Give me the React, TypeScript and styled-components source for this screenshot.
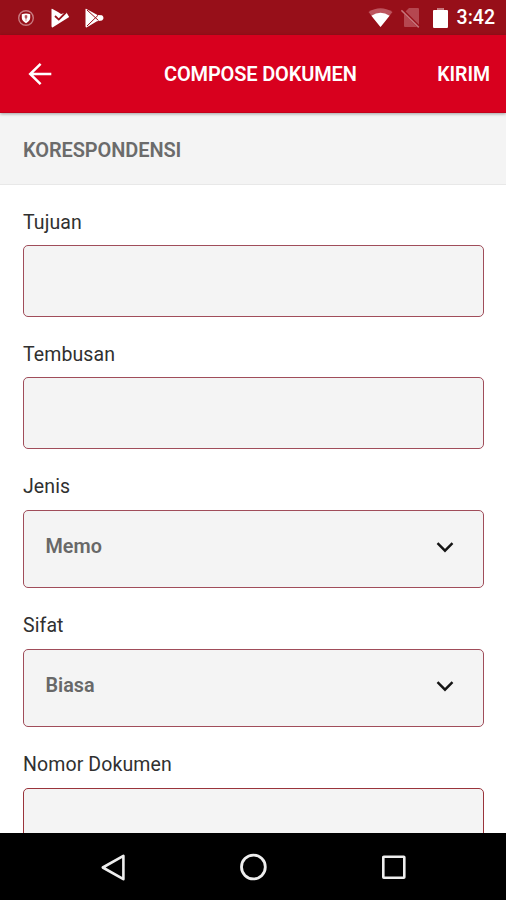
import React from 'react';
import styled, { createGlobalStyle } from 'styled-components';

const GlobalStyle = createGlobalStyle`
  * { box-sizing: border-box; }
  body { margin: 0; background: #fff; font-family: Roboto, "Liberation Sans", sans-serif; }
`;

const Screen = styled.div`
  width: 506px;
  height: 900px;
  display: flex;
  flex-direction: column;
  overflow: hidden;
  background: #fff;
`;

const StatusBar = styled.div`
  flex: none;
  height: 35px;
  display: flex;
  align-items: center;
  justify-content: space-between;
  padding: 0 11px 0 17px;
  background: #970f19;
  color: #fff;
`;

const Notifications = styled.div`
  display: flex;
  align-items: center;
`;

const StatusIcon = styled.svg<{ $gap?: number }>`
  display: block;
  flex: none;
  margin-right: ${(p) => p.$gap ?? 0}px;
`;

const Clock = styled.span`
  font-size: 19.5px;
  font-weight: 500;
  line-height: 36px;
  padding-top: 1px;
`;

const AppBar = styled.header`
  flex: none;
  position: relative;
  z-index: 1;
  height: 78px;
  display: grid;
  grid-template-columns: 120px 1fr 120px;
  align-items: center;
  padding: 0 16px 0 24px;
  background: #d8001e;
  color: #fff;
  border-bottom: 1px solid #c4001a;
  box-shadow: 0 1px 3px rgba(0, 0, 0, 0.35);
`;

const IconButton = styled.button`
  width: 32px;
  height: 32px;
  padding: 0;
  border: 0;
  background: none;
  color: inherit;
`;

const Title = styled.h1`
  margin: 0;
  font-size: 20px;
  font-weight: 600;
  line-height: 24px;
  letter-spacing: -0.15px;
  white-space: nowrap;
`;

const TitleSlot = styled.div`
  display: flex;
  padding: 1px 0 0 20px;
`;

const SendButton = styled.button`
  justify-self: end;
  padding: 2px 0 0;
  border: 0;
  background: none;
  color: inherit;
  font: 600 19.5px/24px Roboto, sans-serif;
  letter-spacing: -0.05px;
`;

const SectionHeader = styled.h2`
  flex: none;
  height: 72px;
  margin: 0;
  padding: 25px 23px 0;
  border-bottom: 1px solid #e8e8e8;
  background: #f4f4f4;
  color: #6b6b6b;
  font-size: 20px;
  font-weight: 600;
  line-height: 24px;
  letter-spacing: -0.1px;
`;

const Form = styled.main`
  flex: 1;
  min-height: 0;
  display: flex;
  flex-direction: column;
  gap: 26px;
  padding: 26px 22px 0 23px;
  overflow: hidden;
`;

const Field = styled.div`
  flex: none;
`;

const Label = styled.label<{ $gap: number }>`
  display: block;
  margin-bottom: ${(p) => p.$gap}px;
  color: #303030;
  font-size: 19.5px;
  font-weight: 400;
  line-height: 24px;
  letter-spacing: 0.1px;
`;

const Box = styled.div<{ $height: number; $strong?: boolean }>`
  height: ${(p) => p.$height}px;
  display: flex;
  align-items: center;
  justify-content: space-between;
  padding: 0 29px 4px 21.5px;
  border: 1px solid ${(p) => (p.$strong ? '#9a343b' : '#a04d5a')};
  border-radius: 5px;
  background: #f4f4f4;
`;

const Value = styled.span`
  color: #686868;
  font-size: 19.8px;
  font-weight: 600;
  line-height: 24px;
`;

const NavBar = styled.nav`
  flex: none;
  height: 67px;
  display: flex;
  align-items: center;
  justify-content: space-between;
  padding: 0 98px;
  background: #000;
`;

type FieldData = { label: string; value?: string; height: number; labelGap: number; strong?: boolean };

const fields: FieldData[] = [
  { label: 'Tujuan', height: 72, labelGap: 10 },
  { label: 'Tembusan', height: 72, labelGap: 10 },
  { label: 'Jenis', value: 'Memo', height: 78, labelGap: 11 },
  { label: 'Sifat', value: 'Biasa', height: 78, labelGap: 11 },
  { label: 'Nomor Dokumen', height: 79, labelGap: 11, strong: true },
];

const Chevron = () => (
  <svg width="18" height="12" viewBox="0 0 18 12" fill="none" stroke="#151515" strokeWidth="2.4">
    <path d="M1.5 2.2 9 9.7 16.5 2.2" />
  </svg>
);

export default function App() {
  return (
    <>
      <GlobalStyle />
      <Screen>
        <StatusBar>
          <Notifications>
            <StatusIcon $gap={16} width="18" height="18" viewBox="0 0 18 18">
              <circle cx="9" cy="9" r="7.3" fill="none" stroke="#c87a80" strokeWidth="1.4" />
              <path d="M4.8 5.2Q9 3.8 13.2 5.2V9Q13 12 9 14.2Q5 12 4.8 9Z" fill="#fff" />
              <path d="M8 6.5h2v2.2L9 9.5 8 8.7zM9 9v3" fill="#b6555c" stroke="#b6555c" strokeWidth=".6" />
            </StatusIcon>
            <StatusIcon $gap={15} width="19" height="20" viewBox="0 0 19 20">
              <path d="M1 .7 7 4 10 6 15.5 4.5 18.2 9 1.5 19.4Q.5 19.6.5 18V1.5Q.5.5 1 .7Z" fill="#fff" />
              <path d="m4 8 3.8 3.6L15.3 4" fill="none" stroke="#970f19" strokeWidth="1.8" />
            </StatusIcon>
            <StatusIcon width="19" height="20" viewBox="0 0 19 20">
              <path d="M1 .7 12.5 7 17 7.2Q20 10 17 12.4L12 13.2 1.5 19.4Q.5 19.6.5 18V1.5Q.5.5 1 .7Z" fill="#fff" />
              <path d="m2 2 11.5 10.5M2 18 13 7.3" fill="none" stroke="#970f19" strokeWidth="1" />
            </StatusIcon>
          </Notifications>
          <Notifications>
            <StatusIcon $gap={8} width="25" height="20" viewBox="0 0 25 20">
              <path d="M.5 4Q12.5-3.5 24.5 4L12.5 19Z" fill="#bd555e" />
              <path d="M3.4 7.7Q12.5 1.8 21.6 7.7L12.5 19Z" fill="#fff" />
            </StatusIcon>
            <StatusIcon $gap={12} width="20" height="20" viewBox="0 0 20 20">
              <path d="M8 0h9q1 0 1 1v17q0 1-1 1H4q-1 0-1-1V5z" fill="#b54750" />
              <path d="m1.2 2 17 17" stroke="#970f19" strokeWidth="3" />
              <path d="m.4 2.4 17.4 17" stroke="#c6757b" strokeWidth="1.5" />
            </StatusIcon>
            <StatusIcon $gap={9} width="15" height="20" viewBox="0 0 15 20">
              <path d="M4.5 0h6v2H14q1 0 1 1v15.5q0 1.5-1 1.5H1q-1 0-1-1.5V3q0-1 1-1h3.5z" fill="#fff" />
              <path d="M4.5 0h6v2h-6z" fill="#c6757b" />
            </StatusIcon>
            <Clock>3:42</Clock>
          </Notifications>
        </StatusBar>

        <AppBar>
          <IconButton aria-label="Kembali">
            <svg width="32" height="32" viewBox="0 0 32 32" fill="none" stroke="#fff" strokeWidth="2.5">
              <path d="M27.3 16H6M16.6 5.8 6.2 16l10.4 10.2" />
            </svg>
          </IconButton>
          <TitleSlot>
            <Title>COMPOSE DOKUMEN</Title>
          </TitleSlot>
          <SendButton>KIRIM</SendButton>
        </AppBar>

        <SectionHeader>KORESPONDENSI</SectionHeader>

        <Form>
          {fields.map((f) => (
            <Field key={f.label}>
              <Label $gap={f.labelGap}>{f.label}</Label>
              <Box $height={f.height} $strong={f.strong}>
                {f.value && (
                  <>
                    <Value>{f.value}</Value>
                    <Chevron />
                  </>
                )}
              </Box>
            </Field>
          ))}
        </Form>

        <NavBar>
          <svg width="30" height="30" viewBox="0 0 30 30" fill="none" stroke="#eee" strokeWidth="2.6">
            <path d="M25.4 3.8v23.4L4.8 15.5Z" strokeLinejoin="round" />
          </svg>
          <svg width="30" height="30" viewBox="0 0 30 30" fill="none" stroke="#eee" strokeWidth="2.8">
            <circle cx="15.4" cy="15" r="11.9" />
          </svg>
          <svg width="30" height="30" viewBox="0 0 30 30" fill="none" stroke="#eee" strokeWidth="2.6">
            <rect x="5.3" y="4.8" width="21" height="21" rx=".5" />
          </svg>
        </NavBar>
      </Screen>
    </>
  );
}
